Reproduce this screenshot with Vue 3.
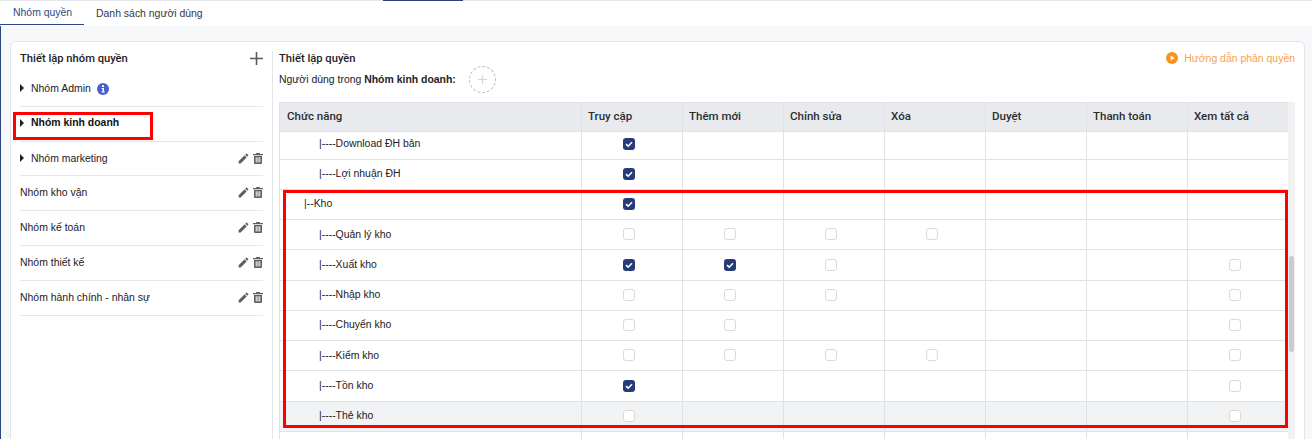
<script setup>
const groups = [
  { name: 'Nhóm Admin', caret: true, info: true },
  { name: 'Nhóm kinh doanh', caret: true, bold: true },
  { name: 'Nhóm marketing', caret: true, actions: true },
  { name: 'Nhóm kho vận', actions: true },
  { name: 'Nhóm kế toán', actions: true },
  { name: 'Nhóm thiết kế', actions: true },
  { name: 'Nhóm hành chính - nhân sự', actions: true },
]
const heads = ['Truy cập', 'Thêm mới', 'Chỉnh sửa', 'Xóa', 'Duyệt', 'Thanh toán', 'Xem tất cả']
const rows = [
  { label: '|----Download ĐH bản', lv: 2, c: 'c------', first: true },
  { label: '|----Lợi nhuận ĐH', lv: 2, c: 'c------' },
  { label: '|--Kho', lv: 1, c: 'c------' },
  { label: '|----Quản lý kho', lv: 2, c: 'uuuu---' },
  { label: '|----Xuất kho', lv: 2, c: 'ccu---u' },
  { label: '|----Nhập kho', lv: 2, c: 'uuu---u' },
  { label: '|----Chuyển kho', lv: 2, c: 'uu----u' },
  { label: '|----Kiểm kho', lv: 2, c: 'uuuu--u' },
  { label: '|----Tồn kho', lv: 2, c: 'c-----u' },
  { label: '|----Thẻ kho', lv: 2, c: 'u-----u', hover: true },
  { label: '', lv: 2, c: '-------' },
]
</script>

<template>
  <div class="page">
    <div class="topstrip"><span class="topmark"></span></div>
    <nav class="tabs">
      <a class="tab active">Nhóm quyền</a>
      <a class="tab">Danh sách người dùng</a>
    </nav>
    <main class="body">
      <section class="card">
        <aside class="left">
          <div class="left-head">
            <h2 class="title">Thiết lập nhóm quyền</h2>
            <svg class="add" viewBox="0 0 13 13" width="13" height="13"><path d="M6.5 0v13M0 6.5h13" stroke="#555a60" stroke-width="1.6" fill="none"/></svg>
          </div>
          <ul class="groups">
            <li v-for="g in groups" :key="g.name" class="group" :class="{ bold: g.bold }">
              <span v-if="g.caret" class="caret"></span>
              <span class="gname">{{ g.name }}</span>
              <svg v-if="g.info" class="info" viewBox="0 0 12 12" width="12" height="12">
                <circle cx="6" cy="6" r="6" fill="#4a5fd3"/>
                <rect x="5" y="2.2" width="2" height="1.8" fill="#fff"/>
                <path d="M4.6 5h2.4v3.6h.8v1H4.6v-1h.9V6h-.9z" fill="#fff"/>
              </svg>
              <span v-if="g.actions" class="actions">
                <svg viewBox="0 0 24 24" width="13" height="13"><path fill="#5b6066" d="M3 17.25V21h3.75L17.81 9.94l-3.75-3.75L3 17.25zM20.71 7.04c.39-.39.39-1.02 0-1.41l-2.34-2.34c-.39-.39-1.02-.39-1.41 0l-1.83 1.83 3.75 3.75 1.83-1.83z"/></svg>
                <svg viewBox="0 0 10 11" width="10" height="11"><path fill="#5b6066" fill-rule="evenodd" d="M3.4 0h3.2l.5 1H10v1.3H0V1h2.9zM1 3h8v7a1 1 0 0 1-1 1H2a1 1 0 0 1-1-1zm1.7 1.3v5.2h1V4.3zm1.8 0v5.2h1V4.3zm1.8 0v5.2h1V4.3z"/></svg>
              </span>
            </li>
          </ul>
        </aside>
        <div class="right">
          <div class="right-head">
            <h2 class="title">Thiết lập quyền</h2>
            <a class="guide">
              <svg viewBox="0 0 12 12" width="12" height="12"><circle cx="6" cy="6" r="6" fill="#f7931e"/><path d="M4.6 3.4 8.6 6l-4 2.6z" fill="#fff"/></svg>
              Hướng dẫn phân quyền
            </a>
          </div>
          <div class="users">
            <span>Người dùng trong <b>Nhóm kinh doanh:</b></span>
            <span class="adduser">
              <svg viewBox="0 0 9 9" width="9" height="9"><path d="M4.5 0v9M0 4.5h9" stroke="#ced5ea" stroke-width="1.2" fill="none"/></svg>
            </span>
          </div>
          <div class="tablewrap">
            <div class="table">
              <div class="row head">
                <div class="cell fn">Chức năng</div>
                <div v-for="h in heads" :key="h" class="cell hc">{{ h }}</div>
              </div>
              <div v-for="(r, i) in rows" :key="i" class="row" :class="{ first: r.first, hover: r.hover }">
                <div class="cell fn" :class="'lv' + r.lv">{{ r.label }}</div>
                <div v-for="(k, j) in r.c.split('')" :key="j" class="cell cc">
                  <span v-if="k === 'u'" class="box"></span>
                  <span v-else-if="k === 'c'" class="box on">
                    <svg viewBox="0 0 12 12" width="12" height="12"><path d="M3 6.2 5.1 8.2 9 4.2" stroke="#fff" stroke-width="1.6" fill="none"/></svg>
                  </span>
                </div>
              </div>
            </div>
            <div class="track"><div class="thumb"></div></div>
          </div>
        </div>
      </section>
    </main>
    <div class="mark mark-group"></div>
    <div class="mark mark-table"></div>
  </div>
</template>

<style>
html, body { margin: 0; height: 439px; overflow: hidden; background: #f7f8fa; }
</style>

<style scoped>
.page { position: relative; height: 439px; overflow: hidden; font-family: "Liberation Sans", Arial, sans-serif; font-size: 10.45px; color: #1d2024; background: #f7f8fa; }
.topstrip { height: 1px; background: #e6e7ea; position: relative; }
.topmark { display: block; width: 80px; height: 1px; margin-left: 383px; background: #2a4080; }
.tabs { display: flex; height: 25px; background: #fff; }
.tab { display: flex; align-items: center; height: 24px; color: #33383e; white-space: nowrap; }
.tab:first-child { box-sizing: border-box; padding-left: 13px; width: 84px; color: #2d4a82; border-bottom: 1px solid #2d4580; }
.tab:last-child { margin-left: 12px; }
.body { border-left: 1px solid #2d4580; padding: 15px 7px 0 9px; height: 413px; box-sizing: border-box; }
.card { display: flex; height: 420px; box-sizing: border-box; background: #fff; border: 1px solid #e4e5e9; border-radius: 6px; padding: 9px 9px 0 9px; }
.left { width: 243px; margin-right: 9px; }
.left-head { display: flex; justify-content: space-between; align-items: center; height: 14px; margin-bottom: 7px; }
.title { margin: 0; padding-top: 2px; font-size: 11.2px; color: #1f2226; line-height: 14px; font-family: Roboto, "Liberation Sans", sans-serif; font-weight: 500; }
.groups { margin: 0; padding: 0; list-style: none; }
.group { display: flex; align-items: center; height: 34.83px; box-sizing: border-box; border-bottom: 1px solid #e6e7ea; padding-bottom: 1px; }
.group.bold { font-weight: 700; color: #111; padding-bottom: 2px; }
.caret { width: 0; height: 0; margin-right: 7px; border-left: 4px solid #222; border-top: 4px solid transparent; border-bottom: 4px solid transparent; }
.info { margin-left: 6px; margin-top: 1px; }
.actions { margin-left: auto; display: flex; align-items: center; gap: 3px; }
.right { flex: 1; min-width: 0; border-left: 1px solid #e6e7ea; padding-left: 6px; }
.right-head { display: flex; justify-content: space-between; align-items: center; height: 14px; }
.guide { display: flex; align-items: center; gap: 6px; color: #f9a24b; }
.users { display: flex; align-items: center; gap: 13px; height: 27px; margin-top: 1px; margin-bottom: 9px; }
.users b { font-weight: 700; color: #1f2226; }
.adduser { display: flex; align-items: center; justify-content: center; width: 25px; height: 25px; border: 1px dashed #b9bcc4; border-radius: 50%; }
.tablewrap { display: flex; }
.table { width: 1009px; border-left: 1px solid #e0e2e7; box-sizing: border-box; }
.row { display: grid; grid-template-columns: 302px repeat(6, 101px) 100px; height: 30.25px; box-sizing: border-box; border-bottom: 1px solid #e0e2e7; }
.row.head { height: 29.7px; background: #e8eaed; border-top: 1px solid #e0e2e7; font-family: Roboto, "Liberation Sans", sans-serif; font-size: 11.5px; font-weight: 500; color: #2a2e33; }
.row.first { height: 28px; }
.row.hover { background: #f2f3f5; }
.cell { display: flex; align-items: center; border-right: 1px solid #e0e2e7; box-sizing: border-box; min-width: 0; white-space: nowrap; padding-bottom: 1px; }
.row .cell:last-child { border-right: 0; }
.row .fn { padding-bottom: 1.5px; }
.row.first .fn { padding-bottom: 4px; }
.row.first .cc { padding-bottom: 2px; }
.fn { padding-left: 7px; }
.lv1 { padding-left: 24px; }
.lv2 { padding-left: 39px; }
.hc { padding-left: 6px; }
.cc { padding-left: 41px; }
.box { display: block; width: 12px; height: 12px; box-sizing: border-box; border: 1px solid #d8dade; border-radius: 3px; background: #fff; }
.box.on { border: 0; background: #263c78; }
.box svg { display: block; }
.track { width: 7px; height: 340px; background: #f1f1f1; }
.thumb { width: 5px; height: 96px; margin: 154px 0 0 1px; border-radius: 3px; background: #cbcbcb; }
.mark { position: absolute; box-sizing: border-box; border: 3px solid #f00; }
.mark-group { left: 13px; top: 112px; width: 140px; height: 28px; }
.mark-table { left: 283px; top: 190px; width: 1005px; height: 238px; }
</style>
